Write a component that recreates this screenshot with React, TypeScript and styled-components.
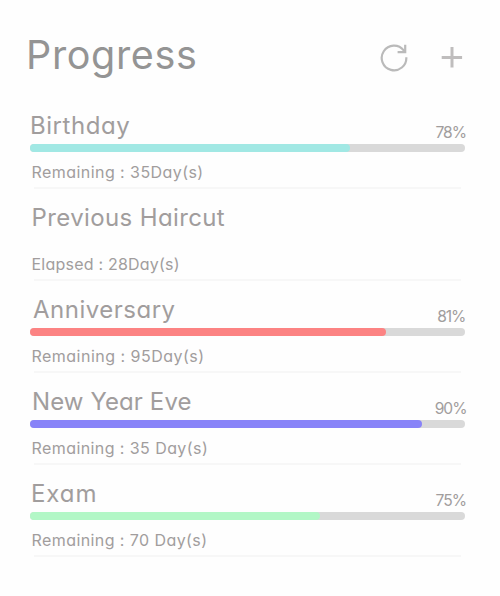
import React from 'react';
import styled, { createGlobalStyle } from 'styled-components';

const GlobalStyle = createGlobalStyle`
  * { box-sizing: border-box; }
  body {
    margin: 0;
    background: #fefefe;
    font-family: Inter, 'Open Sans', sans-serif;
    font-feature-settings: 'cv11' 1, 'calt' 0;
  }
`;

const Screen = styled.main`
  width: 500px;
  height: 596px;
  overflow: hidden;
`;

const Header = styled.header`
  height: 97px;
  padding: 31px 31px 0 26px;
  display: flex;
  justify-content: space-between;
  align-items: flex-start;
`;

const Heading = styled.h1`
  margin: 0;
  font-size: 39.5px;
  line-height: 48px;
  font-weight: 400;
  letter-spacing: 0.65px;
  color: #949494;
`;

const Actions = styled.div`
  display: flex;
  gap: 29px;
  padding-top: 11px;
`;

const IconButton = styled.button`
  width: 30px;
  height: 30px;
  padding: 0;
  border: 0;
  background: none;
  svg { display: block; }
`;

const List = styled.ul`
  list-style: none;
  margin: 0;
  padding: 0 35px 0 30px;
`;

const Item = styled.li`
  height: 92px;
  display: grid;
  grid-template-rows: 47px 8px 35px 2px;
`;

const ItemHead = styled.div`
  display: flex;
  justify-content: space-between;
`;

const Title = styled.h2<{ $indent: number; $spacing: number }>`
  margin: 0;
  padding: 11px 0 0 ${(p) => p.$indent}px;
  font-size: 24px;
  line-height: 36px;
  font-weight: 390;
  letter-spacing: ${(p) => p.$spacing}px;
  color: #a19d9d;
  white-space: nowrap;
`;

const Percent = styled.span<{ $shift: number; $spacing: number }>`
  margin: 24px ${(p) => p.$shift}px 0 0;
  font-size: 15.6px;
  font-weight: 400;
  line-height: 24px;
  height: 23px;
  letter-spacing: ${(p) => p.$spacing}px;
  color: #a19d9d;
`;

const Track = styled.div`
  height: 8px;
  border-radius: 4px;
  background: #d9d9d9;
`;

const Fill = styled.div<{ $color: string }>`
  height: 8px;
  border-radius: 4px;
  background: ${(p) => p.$color};
`;

const Detail = styled.p<{ $spacing: number }>`
  margin: 8px 0 0 1.5px;
  font-size: 16px;
  font-weight: 400;
  line-height: 24px;
  letter-spacing: ${(p) => p.$spacing}px;
  color: #a19d9d;
  white-space: nowrap;
`;

const Divider = styled.div`
  margin: 0 4px;
  background: #f7f7f7;
`;

interface Entry {
  title: string;
  indent: number;
  spacing: number;
  detail: string;
  detailSpacing: number;
  progress?: { value: number; fill: number; color: string; shift: number; spacing: number };
}

const entries: Entry[] = [
  { title: 'Birthday', indent: 0, spacing: 0.55, detail: 'Remaining : 35Day(s)', detailSpacing: 0.44,
    progress: { value: 78, fill: 320, color: '#a1e8e4', shift: -1, spacing: -1 } },
  { title: 'Previous Haircut', indent: 1.5, spacing: 0.38, detail: 'Elapsed : 28Day(s)', detailSpacing: 0.22 },
  { title: 'Anniversary', indent: 3, spacing: 0.5, detail: 'Remaining : 95Day(s)', detailSpacing: 0.48,
    progress: { value: 81, fill: 356, color: '#fc8383', shift: 0, spacing: -1.2 } },
  { title: 'New Year Eve', indent: 2, spacing: 0.1, detail: 'Remaining : 35 Day(s)', detailSpacing: 0.42,
    progress: { value: 90, fill: 392, color: '#8883f8', shift: -1.5, spacing: -1 } },
  { title: 'Exam', indent: 1, spacing: 0.9, detail: 'Remaining : 70 Day(s)', detailSpacing: 0.42,
    progress: { value: 75, fill: 290, color: '#b2f7c6', shift: -1, spacing: -1 } },
];

const RefreshIcon = () => (
  <svg width="30" height="30" viewBox="0 0 30 30" fill="none" stroke="#bababa" strokeWidth="2.2">
    <path d="M26.3 15.2A12.3 12.3 0 1 1 23.7 8.4L25 10" />
    <path d="M25.2 2.7V10.1H17.6" />
  </svg>
);

const PlusIcon = () => (
  <svg width="30" height="30" viewBox="0 0 30 30" fill="none" stroke="#bfbdbd" strokeWidth="3">
    <path d="M2.7 15.4h20.4M13 5v20.6" />
  </svg>
);

export default function App() {
  return (
    <Screen>
      <GlobalStyle />
      <Header>
        <Heading>Progress</Heading>
        <Actions>
          <IconButton aria-label="Refresh"><RefreshIcon /></IconButton>
          <IconButton aria-label="Add"><PlusIcon /></IconButton>
        </Actions>
      </Header>
      <List>
        {entries.map((e) => (
          <Item key={e.title}>
            <ItemHead>
              <Title $indent={e.indent} $spacing={e.spacing}>{e.title}</Title>
              {e.progress && (
                <Percent $shift={e.progress.shift} $spacing={e.progress.spacing}>{e.progress.value}%</Percent>
              )}
            </ItemHead>
            {e.progress ? (
              <Track>
                <Fill $color={e.progress.color} style={{ width: e.progress.fill }} />
              </Track>
            ) : (
              <div />
            )}
            <Detail $spacing={e.detailSpacing}>{e.detail}</Detail>
            <Divider />
          </Item>
        ))}
      </List>
    </Screen>
  );
}
